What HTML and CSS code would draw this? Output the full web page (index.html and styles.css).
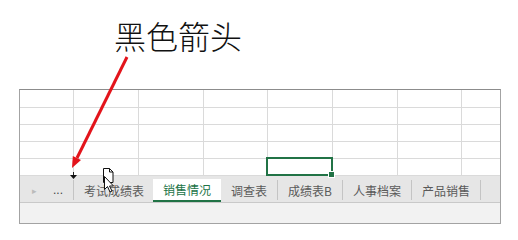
FILE: index.html
```html
<!DOCTYPE html>
<html lang="zh-CN">
<head>
    <meta charset="UTF-8">
    <meta name="viewport" content="width=device-width, initial-scale=1.0">
    <title>黑色箭头</title>
    <link rel="stylesheet" href="styles.css">
</head>
<body>
    <div class="page">
        <div class="caption">黑色箭头</div>

        <div class="book">
            <div class="grid">
                <div class="cell"></div><div class="cell"></div><div class="cell"></div><div class="cell"></div><div class="cell"></div><div class="cell"></div><div class="cell"></div><div class="cell last"></div>
                <div class="cell"></div><div class="cell"></div><div class="cell"></div><div class="cell"></div><div class="cell"></div><div class="cell"></div><div class="cell"></div><div class="cell last"></div>
                <div class="cell"></div><div class="cell"></div><div class="cell"></div><div class="cell"></div><div class="cell"></div><div class="cell"></div><div class="cell"></div><div class="cell last"></div>
                <div class="cell"></div><div class="cell"></div><div class="cell"></div><div class="cell"></div><div class="cell"></div><div class="cell"></div><div class="cell"></div><div class="cell last"></div>
                <div class="cell"></div><div class="cell"></div><div class="cell"></div><div class="cell"></div><div class="cell sel"><span class="handle"></span></div><div class="cell"></div><div class="cell"></div><div class="cell last"></div>
            </div>

            <div class="tabbar">
                <div class="nav">
                    <span class="nav-arrow">&#9656;</span>
                    <span class="nav-more">...</span>
                </div>
                <div class="tab no-sep">考试成绩表</div>
                <div class="tab active">销售情况</div>
                <div class="tab">调查表</div>
                <div class="tab">成绩表B</div>
                <div class="tab">人事档案</div>
                <div class="tab">产品销售</div>
            </div>

            <div class="status"></div>
        </div>

        <!-- 标注：红色箭头、黑色小三角、拖动光标 -->
        <svg class="overlay" width="518" height="240" viewBox="0 0 518 240">
            <line x1="127" y1="57" x2="77" y2="158" stroke="#e3141b" stroke-width="3"/>
            <polygon points="72,168 81,160 72.8,156" fill="#e3141b"/>
            <line x1="73.5" y1="172" x2="73.5" y2="175" stroke="#222" stroke-width="1"/>
            <polygon points="70,175 77,175 73.5,179" fill="#111"/>
            <path d="M103.5 168.5 h6 l3.5 3.5 v10.5 h-9.5 z" fill="#fff" stroke="#111" stroke-width="1"/>
            <path d="M109.5 168.5 v3.5 h3.5" fill="none" stroke="#111" stroke-width="1"/>
            <path d="M104.5 176.5 v13 l3 -3 l2.5 5.5 l2 -1 l-2.5 -5 h4 z" fill="#fff" stroke="#111" stroke-width="1"/>
        </svg>
    </div>
</body>
</html>
```

FILE: styles.css
```css
body {
    margin: 0;
    background: #fff;
    font-family: "Noto Sans CJK SC", "Noto Sans", sans-serif;
}
.page {
    position: relative;
    width: 518px;
    height: 240px;
    overflow: hidden;
}
.caption {
    padding-left: 114px;
    margin-top: 19px;
    height: 70px;
    font-size: 32px;
    font-weight: 300;
    line-height: 32px;
    color: #111;
}
.book {
    margin-left: 19px;
    width: 480px;
    border: 1px solid #a3a3a3;
    border-top-color: #8c8c8c;
}
.grid {
    display: grid;
    grid-template-columns: 54px 65px 65px 64px 65px 65px 64px 1fr;
    grid-template-rows: 18px 17px 17px 17px 17px;
}
.cell {
    box-sizing: border-box;
    border-right: 1px solid #dadada;
    border-bottom: 1px solid #dadada;
}
.cell.last {
    border-right: none;
}
.cell.sel {
    position: relative;
}
.cell.sel::after {
    content: "";
    position: absolute;
    top: -2px;
    left: -2px;
    right: -1px;
    bottom: -1px;
    border: 2px solid #217346;
}
.handle {
    position: absolute;
    right: -3px;
    bottom: -3px;
    width: 5px;
    height: 5px;
    background: #217346;
    border: 1px solid #fff;
    z-index: 1;
}
.tabbar {
    display: flex;
    height: 27px;
    box-sizing: border-box;
    background: #e6e6e6;
    border-bottom: 1px solid #c9c9c9;
}
.nav {
    display: flex;
    align-items: center;
    width: 53px;
    margin: 4px 0 2px;
    border-right: 1px solid #c4c4c4;
    font-size: 12px;
    color: #bbb;
}
.nav-arrow {
    margin-left: 12px;
    font-size: 9px;
}
.nav-more {
    margin-left: 16px;
    color: #444;
    font-family: "Liberation Sans", sans-serif;
}
.tab {
    display: flex;
    align-items: center;
    padding: 0 10px;
    margin: 4px 0 2px;
    border-right: 1px solid #c4c4c4;
    font-size: 12px;
    color: #5a5a5a;
    white-space: nowrap;
}
.tab.no-sep {
    border-right: none;
    padding-right: 9px;
}
.tab.active {
    margin: 3px 0 0;
    padding-bottom: 1px;
    background: #fff;
    color: #217346;
    border-right: none;
    border-bottom: 2px solid #217346;
}
.status {
    height: 20px;
    background: #f2f2f2;
}
.overlay {
    position: absolute;
    left: 0;
    top: 0;
    pointer-events: none;
}
```
